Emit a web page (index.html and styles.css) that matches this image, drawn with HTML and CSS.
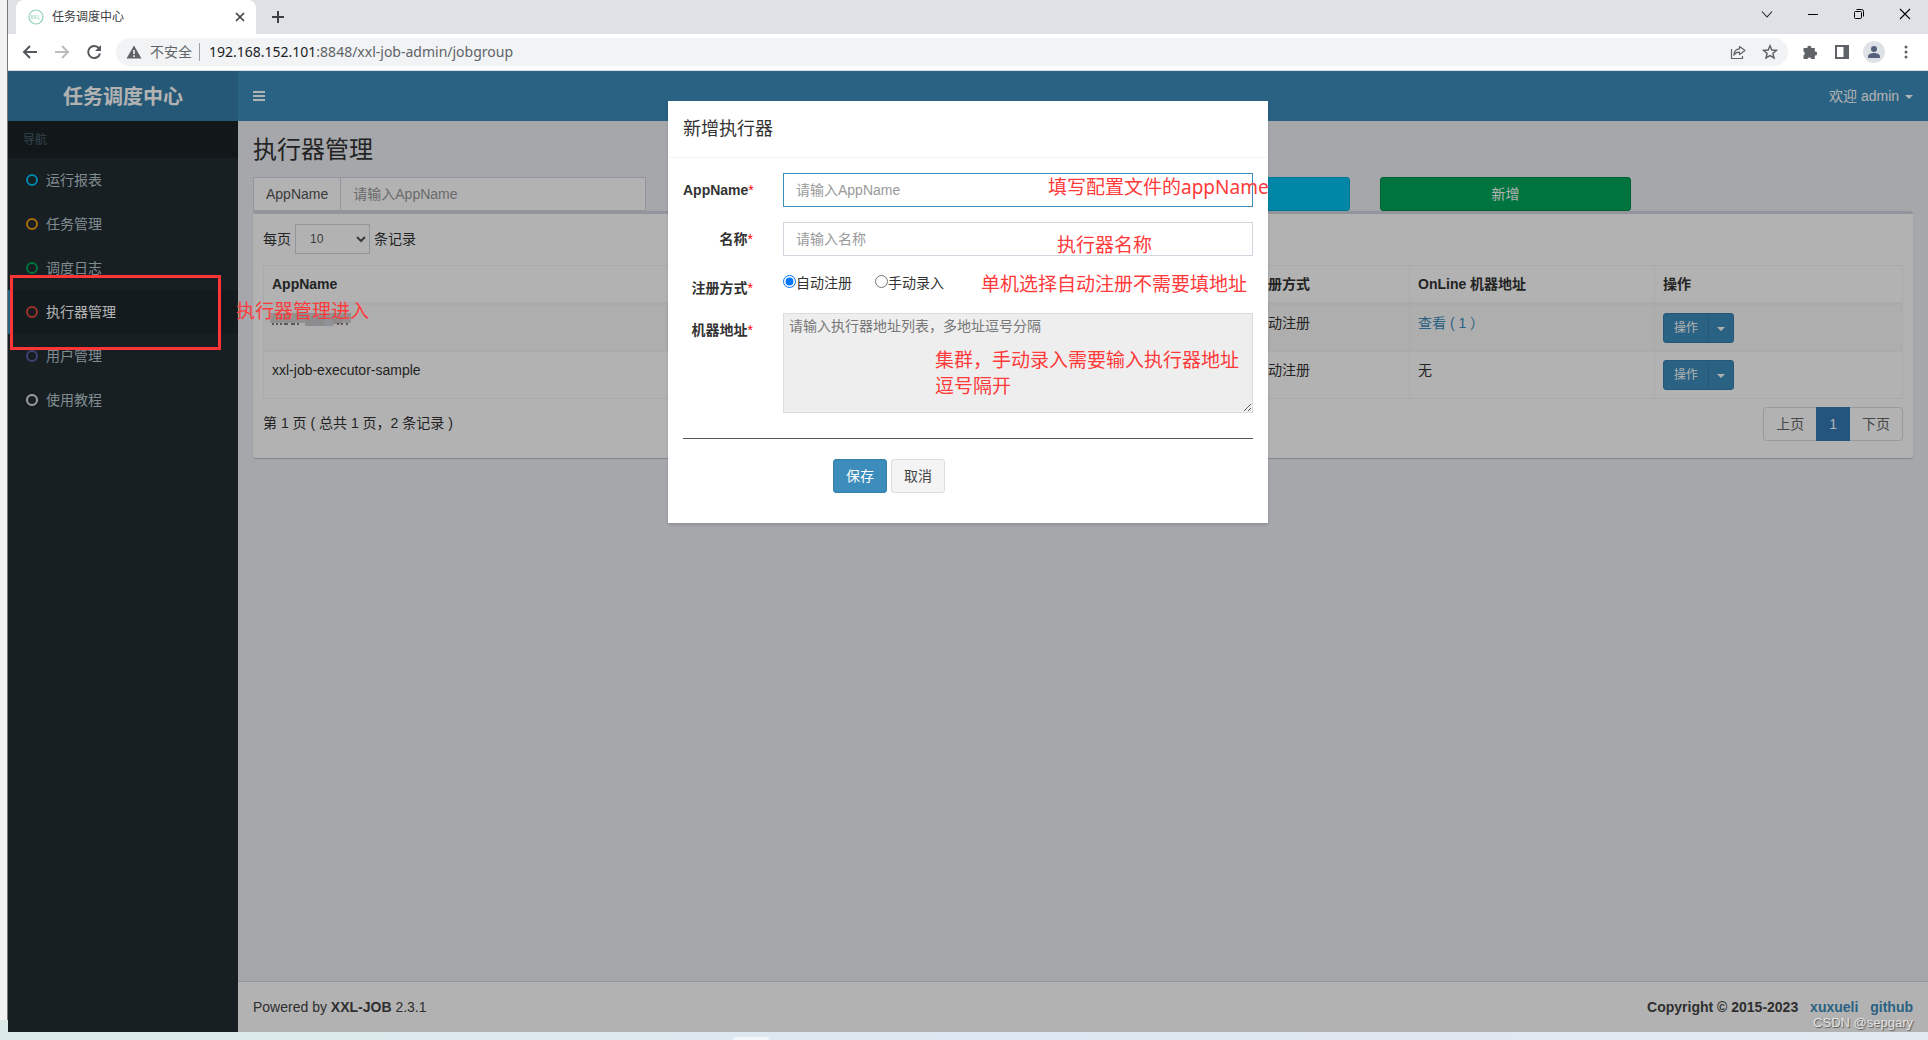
FILE: index.html
```html
<!DOCTYPE html>
<html lang="zh-CN">
<head>
<meta charset="utf-8">
<title>任务调度中心</title>
<link rel="stylesheet" href="styles.css">
</head>
<body>
<div class="desktop">
  <div class="behind"></div>
  <div class="window">
    <div class="tabstrip">
      <div class="tab">
        <svg class="favicon" width="16" height="16" viewBox="0 0 16 16"><ellipse cx="8" cy="8" rx="7" ry="7" fill="none" stroke="#8fd3b6" stroke-width="1.2"/><path d="M3 6l2 4M5 6l-2 4M6 6l2 4M8 6l-2 4M10 6v4h2" fill="none" stroke="#a9dcc6" stroke-width=".9"/></svg>
        <span class="tab-title">任务调度中心</span>
        <button class="chrome-btn" aria-label="关闭标签页"><svg width="16" height="16" viewBox="0 0 16 16"><path d="M4 4l8 8M12 4l-8 8" stroke="#3c4043" stroke-width="1.7"/></svg></button>
      </div>
      <button class="chrome-btn new-tab" aria-label="新标签页"><svg width="16" height="16" viewBox="0 0 16 16"><path d="M8 2v12M2 8h12" stroke="#3c4043" stroke-width="2"/></svg></button>
      <div class="window-controls">
        <button class="chrome-btn" aria-label="搜索标签页"><svg width="16" height="16" viewBox="0 0 16 16"><path d="M3 5.500l5 5.500 5-5.500" fill="none" stroke="#222" stroke-width="1.100"/></svg></button>
        <button class="chrome-btn" aria-label="最小化"><svg width="16" height="16" viewBox="0 0 16 16"><path d="M3 8.500h10" stroke="#000"/></svg></button>
        <button class="chrome-btn" aria-label="还原"><svg width="16" height="16" viewBox="0 0 16 16"><rect x="3.500" y="5.500" width="7" height="7" rx="1" fill="none" stroke="#000"/><path d="M5.500 3.500h5a2 2 0 0 1 2 2v5" fill="none" stroke="#000"/></svg></button>
        <button class="chrome-btn" aria-label="关闭"><svg width="16" height="16" viewBox="0 0 16 16"><path d="M3 3l10 10M13 3L3 13" stroke="#000" stroke-width="1.100"/></svg></button>
      </div>
    </div>
    <div class="toolbar">
      <button class="chrome-btn" aria-label="后退"><svg width="16" height="16" viewBox="0 0 16 16"><path d="M15 8H2.500M8 2L2 8l6 6" fill="none" stroke="#55585c" stroke-width="2"/></svg></button>
      <button class="chrome-btn" aria-label="前进"><svg width="16" height="16" viewBox="0 0 16 16"><path d="M1 8h12.500M8 2l6 6-6 6" fill="none" stroke="#babcbe" stroke-width="2"/></svg></button>
      <button class="chrome-btn" aria-label="刷新"><svg width="16" height="16" viewBox="0 0 16 16"><path d="M13 4.400A6 6 0 1 0 14 9.500" fill="none" stroke="#55585c" stroke-width="2"/><path d="M15 1v6H9z" fill="#55585c"/></svg></button>
      <div class="omnibox">
        <svg width="16" height="16" viewBox="0 0 16 16"><path d="M8 1.500L15.500 14.500H.5z" fill="#5f6368"/><path d="M8 6v4M8 11.300v1.600" stroke="#f1f3f4" stroke-width="1.600"/></svg>
        <span class="insecure">不安全</span>
        <span class="url"><b>192.168.152.101</b>:8848/xxl-job-admin/jobgroup</span>
        <button class="chrome-btn share" aria-label="分享"><svg width="16" height="16" viewBox="0 0 16 16"><path d="M1.500 5v9.500h11V12" fill="none" stroke="#5f6368" stroke-width="1.200"/><path d="M9.500 2.500l5.500 4-5.500 4V8.200C7 8 5.200 9 3.800 11.200 4 7.600 6.300 5 9.500 4.800z" fill="none" stroke="#5f6368" stroke-width="1.200" stroke-linejoin="round"/></svg></button>
        <button class="chrome-btn" aria-label="收藏"><svg width="16" height="16" viewBox="0 0 16 16"><path d="M8 1.800l1.800 4.200 4.600.4-3.500 3 1.100 4.500L8 11.500l-4 2.400 1.100-4.500-3.500-3L6.200 6z" fill="none" stroke="#5f6368" stroke-width="1.500"/></svg></button>
      </div>
      <button class="chrome-btn" aria-label="扩展程序"><svg width="16" height="16" viewBox="0 0 16 16"><path d="M1.500 4h4a1.900 1.900 0 1 1 3.700 0h3.600v3.700a1.900 1.900 0 1 1 0 3.700V15H9.200a1.900 1.900 0 0 0-3.700 0h-4v-3.800a1.900 1.900 0 0 0 0-3.600z" fill="#5f6368"/></svg></button>
      <button class="chrome-btn" aria-label="侧边栏"><svg width="16" height="16" viewBox="0 0 16 16"><rect x="2" y="2" width="12" height="12" fill="none" stroke="#5f6368" stroke-width="2"/><path d="M9.500 2h5v12h-5z" fill="#5f6368"/></svg></button>
      <button class="chrome-btn avatar" aria-label="用户"><svg width="16" height="16" viewBox="0 0 16 16"><circle cx="8" cy="5" r="3" fill="#55617a"/><path d="M2 14v-1.500C2 10 5.500 9 8 9s6 1 6 3.500V14z" fill="#55617a"/></svg></button>
      <button class="chrome-btn" aria-label="菜单"><svg width="16" height="16" viewBox="0 0 16 16"><g fill="#5f6368"><circle cx="8" cy="3" r="1.500"/><circle cx="8" cy="8" r="1.500"/><circle cx="8" cy="13" r="1.500"/></g></svg></button>
    </div>

    <div class="app">
      <header class="app-header">
        <a class="logo" href="#">任务调度中心</a>
        <nav class="navbar">
          <button class="menu-toggle" aria-label="切换导航"><svg width="14" height="12" viewBox="0 0 14 12"><path d="M0 2h12M0 6h12M0 10h12" stroke="#fff" stroke-width="2"/></svg></button>
          <a class="user-menu" href="#">欢迎 admin <i class="caret"></i></a>
        </nav>
      </header>
      <div class="app-body">
        <aside class="sidebar">
          <div class="nav-label">导航</div>
          <a class="nav-item aqua" href="#"><i class="ring"></i>运行报表</a>
          <a class="nav-item yellow" href="#"><i class="ring"></i>任务管理</a>
          <a class="nav-item green" href="#"><i class="ring"></i>调度日志</a>
          <a class="nav-item red active" href="#"><i class="ring"></i>执行器管理</a>
          <a class="nav-item purple" href="#"><i class="ring"></i>用户管理</a>
          <a class="nav-item plain" href="#"><i class="ring"></i>使用教程</a>
        </aside>
        <div class="main">
          <main class="content">
            <h1>执行器管理</h1>
            <div class="filters">
              <div class="input-group">
                <label for="filter-app">AppName</label>
                <input id="filter-app" type="text" placeholder="请输入AppName">
              </div>
              <button class="btn btn-info" aria-label="搜索"></button>
              <button class="btn btn-success">新增</button>
            </div>
            <section class="box">
              <div class="length">
                <label for="page-size">每页</label>
                <select id="page-size"><option>10</option></select>
                <span>条记录</span>
              </div>
              <table>
                <colgroup><col><col class="c-type"><col class="c-online"><col class="c-action"></colgroup>
                <thead>
                  <tr><th>AppName</th><th>注册方式</th><th>OnLine 机器地址</th><th>操作</th></tr>
                </thead>
                <tbody>
                  <tr>
                    <td><svg class="mosaic" width="82" height="14" viewBox="0 0 82 14"><path d="M0 0h81v10H0z" fill="#d3d0cf"/><path d="M12 0h8v7h-8zM27 0h8v7h-8z" fill="#c9c6c6"/><path d="M35 3h28v10H35z" fill="#c9c9cd"/><path d="M54 3h9v10h-9z" fill="#cdd2dc"/><path d="M63 3h9v8h-9z" fill="#cbc5c4"/><path d="M2 11h2M6 11h2M10 11h2M14 11h4M21 11h4M27 11h2M67 11h2M71 11h2M76 11h2" stroke="#555" stroke-width="1.500"/></svg></td>
                    <td>自动注册</td>
                    <td><a href="#">查看 ( 1 ）</a></td>
                    <td><div class="btn-group"><button>操作</button><button aria-label="展开操作"><i class="caret"></i></button></div></td>
                  </tr>
                  <tr>
                    <td>xxl-job-executor-sample</td>
                    <td>自动注册</td>
                    <td>无</td>
                    <td><div class="btn-group"><button>操作</button><button aria-label="展开操作"><i class="caret"></i></button></div></td>
                  </tr>
                </tbody>
              </table>
              <div class="table-foot">
                <span class="info">第 1 页 ( 总共 1 页，2 条记录 )</span>
                <div class="pager"><a href="#">上页</a><a class="current" href="#">1</a><a href="#">下页</a></div>
              </div>
            </section>
          </main>
          <footer class="app-footer">
            <span>Powered by <b>XXL-JOB</b> 2.3.1</span>
            <strong>Copyright © 2015-2023 <a href="#">xuxueli</a> <a href="#">github</a></strong>
          </footer>
        </div>
      </div>

      <div class="backdrop">
        <form class="modal">
          <div class="modal-header"><h4>新增执行器</h4></div>
          <div class="modal-body">
            <div class="row">
              <label class="field-label" for="appname">AppName<em>*</em></label>
              <input class="control focused" id="appname" type="text" placeholder="请输入AppName">
            </div>
            <div class="row">
              <label class="field-label" for="title">名称<em>*</em></label>
              <input class="control" id="title" type="text" placeholder="请输入名称">
            </div>
            <div class="row">
              <span class="field-label">注册方式<em>*</em></span>
              <div class="radios">
                <label><input type="radio" name="type" checked>自动注册</label>
                <label><input type="radio" name="type">手动录入</label>
              </div>
            </div>
            <div class="row">
              <label class="field-label" for="address">机器地址<em>*</em></label>
              <textarea id="address" placeholder="请输入执行器地址列表，多地址逗号分隔" readonly></textarea>
            </div>
            <hr>
            <div class="actions">
              <button class="btn btn-primary" type="button">保存</button>
              <button class="btn btn-default" type="button">取消</button>
            </div>
          </div>
          <p class="note note-appname">填写配置文件的appName</p>
          <p class="note note-title">执行器名称</p>
          <p class="note note-type">单机选择自动注册不需要填地址</p>
          <p class="note note-address">集群，手动录入需要输入执行器地址<br>逗号隔开</p>
        </form>
      </div>
      <div class="marker"></div>
      <p class="note note-menu">执行器管理进入</p>
      <div class="watermark">CSDN @sepgary</div>
    </div>
  </div>
  <div class="taskbar-tip"></div>
</div>
</body>
</html>
```
FILE: styles.css
```css
* { box-sizing: border-box; }

body {
  margin: 0;
  font: 14px/20px "Liberation Sans", "Noto Sans CJK SC", sans-serif;
  color: #333;
}

a { color: #3c8dbc; text-decoration: none; }
button, input, select, textarea { font: inherit; margin: 0; }
button { cursor: pointer; }
p { margin: 0; }

.desktop {
  position: relative;
  display: flex;
  min-height: 100vh;
  padding-bottom: 8px;
  background: linear-gradient(90deg, #dceae8, #dde8f2 50%, #e2e8f0);
}

.behind {
  width: 8px;
  margin-bottom: 12px;
  background: #f2f2f2;
  border-right: 1px solid #777;
}

.taskbar-tip {
  position: absolute;
  left: 38%;
  bottom: 0;
  width: 36px;
  height: 3px;
  border-radius: 3px 3px 0 0;
  background: #f3f7fa;
}

.window { flex: 1; display: flex; flex-direction: column; min-width: 0; }

/* Browser chrome */
.chrome-btn {
  display: flex;
  align-items: center;
  justify-content: center;
  width: 16px;
  height: 16px;
  padding: 0;
  border: 0;
  background: none;
}

.tabstrip {
  display: flex;
  height: 34px;
  padding-left: 8px;
  background: #dee1e6;
}

.tab {
  display: flex;
  align-items: center;
  width: 240px;
  padding: 0 8px 0 12px;
  border-radius: 8px 8px 0 0;
  background: #fff;
  font-size: 12px;
}

.tab-title { flex: 1; margin-left: 8px; color: #3c4043; }
.new-tab { align-self: center; margin-left: 14px; }

.window-controls { display: flex; gap: 30px; margin: 6px 15px 0 auto; }

.toolbar {
  display: flex;
  align-items: center;
  gap: 16px;
  height: 37px;
  padding: 0 14px;
  border-bottom: 1px solid #dadce0;
  background: #fff;
}

.omnibox {
  flex: 1;
  display: flex;
  align-items: center;
  height: 28px;
  margin: 0 -2px;
  padding: 0 10px;
  border-radius: 14px;
  background: #f1f3f4;
  font-family: "Noto Sans", "Noto Sans CJK SC", sans-serif;
  color: #5f6368;
}

.insecure { margin: 0 9px 0 8px; padding-right: 7px; border-right: 1px solid #9aa0a6; line-height: 18px; }
.url b { font-weight: 400; color: #202124; }
.share { margin: 0 16px 0 auto; }
.avatar { width: 22px; height: 22px; margin: 0 -3px; border-radius: 50%; background: #dee1e6; }

/* Application */
.app { position: relative; flex: 1; display: flex; flex-direction: column; }

.app-header { display: flex; height: 50px; color: #fff; }
.logo {
  width: 230px;
  background: #367fa9;
  color: #fff;
  font-size: 20px;
  font-weight: 700;
  line-height: 52px;
  text-align: center;
}
.navbar {
  flex: 1;
  display: flex;
  align-items: center;
  justify-content: space-between;
  padding: 0 15px;
  background: #3c8dbc;
}
.menu-toggle { display: flex; padding: 0; border: 0; background: none; }
.user-menu { color: #fff; }
.caret {
  display: inline-block;
  margin-left: 2px;
  border: 4px solid transparent;
  border-top-color: currentColor;
  border-bottom: 0;
  vertical-align: middle;
}

.app-body { flex: 1; display: flex; }

.sidebar { width: 230px; background: #222d32; }
.nav-label {
  padding: 11px 15px 9px;
  background: #1a2226;
  color: #4b646f;
  font-size: 12px;
  line-height: 17px;
}
.nav-item {
  display: flex;
  align-items: center;
  gap: 8px;
  height: 44px;
  padding-left: 15px;
  border-left: 3px solid transparent;
  color: #b8c7ce;
}
.nav-item.active { border-color: #3c8dbc; background: #1e282c; color: #fff; }
.ring { width: 12px; height: 12px; border: 2px solid; border-radius: 50%; }
.aqua .ring { color: #00c0ef; }
.yellow .ring { color: #f39c12; }
.green .ring { color: #00a65a; }
.red .ring { color: #dd4b39; }
.purple .ring { color: #605ca8; }
.plain .ring { color: #dfe5e8; }

.main { flex: 1; display: flex; flex-direction: column; min-width: 0; background: #ecf0f5; }
.content { flex: 1; padding: 15px; }
h1 { margin: 0 0 13px; font-size: 24px; font-weight: 400; line-height: 28px; }

.filters { display: grid; grid-template-columns: repeat(12, 1fr); margin: 0 -15px; }
.filters > * { margin: 0 15px; }
.input-group { grid-column: span 3; display: flex; height: 34px; border: 1px solid #d2d6de; background: #fff; }
.input-group label { padding: 6px 12px; border-right: 1px solid #d2d6de; color: #555; }
.input-group input { flex: 1; min-width: 0; padding: 0 12px; border: 0; background: none; }
input::placeholder { color: #999; }

.btn { height: 34px; padding: 0 12px; border: 1px solid; border-radius: 3px; color: #fff; }
.btn-info { grid-column: 7 / span 2; background: #00c0ef; border-color: #00acd6; }
.btn-success { grid-column: 9 / span 2; background: #00a65a; border-color: #008d4c; }
.btn-primary { background: #3c8dbc; border-color: #367fa9; }
.btn-default { background: #f4f4f4; border-color: #ddd; color: #444; }

.box {
  padding: 10px 10px 17px;
  border-top: 3px solid #d2d6de;
  border-radius: 3px;
  background: #fff;
  box-shadow: 0 1px 1px rgba(0, 0, 0, .2);
}
.length { display: flex; align-items: center; gap: 4px; margin-bottom: 11px; }
.length select {
  width: 75px;
  height: 30px;
  padding: 0 10px;
  border: 1px solid #d2d6de;
  background: #fff;
  color: #555;
  font-size: 12px;
}

table { width: 100%; border-collapse: separate; border-spacing: 0; table-layout: fixed; border: 1px solid #f4f4f4; border-width: 1px 0 0 1px; }
.c-type { width: 164px; }
.c-online { width: 245px; }
.c-action { width: 248px; }
th, td { padding: 8px; border: 0 solid #f4f4f4; border-width: 0 1px 1px 0; text-align: left; vertical-align: top; }
th { border-bottom-width: 3px; color: #333; }
tbody tr:first-child { background: #f9f9f9; }
.mosaic { display: block; margin-left: -2px; }

.btn-group { display: flex; }
.btn-group button {
  height: 30px;
  padding: 0 10px;
  border: 1px solid #367fa9;
  border-radius: 3px 0 0 3px;
  background: #3c8dbc;
  color: #fff;
  font-size: 12px;
}
.btn-group button + button { margin-left: -1px; padding: 0 8px; border-radius: 0 3px 3px 0; }
.btn-group .caret { margin: 0; }

.table-foot { display: flex; justify-content: space-between; margin-top: 8px; }
.info { padding-top: 6px; }
.pager { display: flex; }
.pager a { padding: 6px 12px; border: 1px solid #ddd; color: #666; }
.pager a:first-child { border-right: 0; border-radius: 4px 0 0 4px; }
.pager a:last-child { border-left: 0; border-radius: 0 4px 4px 0; }
.pager .current { background: #337ab7; border-color: #337ab7; color: #fff; }

.app-footer {
  display: flex;
  justify-content: space-between;
  padding: 15px;
  border-top: 1px solid #d2d6de;
  background: #fff;
  color: #444;
}
.app-footer strong a { margin-left: 8px; }

/* Dialog */
.backdrop { position: absolute; inset: 0; background: rgba(0, 0, 0, .3); }
.modal {
  position: relative;
  width: 600px;
  margin: 30px auto;
  background: #fff;
  box-shadow: 0 2px 3px rgba(0, 0, 0, .125);
}
.modal-header { padding: 15px; border-bottom: 1px solid #f4f4f4; }
.modal h4 { margin: 0; font-size: 18px; font-weight: 400; line-height: 26px; }
.modal-body { padding: 15px 15px 30px; }
.row { display: flex; gap: 30px; margin-bottom: 15px; }
.field-label { width: 70px; padding-top: 7px; font-weight: 700; text-align: right; white-space: nowrap; }
.field-label em { color: #f00; font-style: normal; font-weight: 400; }
.control { flex: 1; height: 34px; padding: 0 12px; border: 1px solid #d2d6de; }
.control.focused { border-color: #3c8dbc; }
.radios { display: flex; gap: 23px; padding-top: 2px; }
.radios label { display: flex; align-items: flex-start; }
.radios input { width: 13px; height: 13px; margin: 2px 0 0; }
.modal textarea { flex: 1; height: 100px; padding: 2px 5px; border: 1px solid #ddd; background: #eee; }
.modal textarea::placeholder { color: #777; }
.modal hr { height: 1px; margin: 25px 0 20px; border: 0; background: #555; }
.actions { display: flex; gap: 4px; padding-left: 150px; }

/* Red notes laid over the page */
.note {
  position: absolute;
  font: 19px/26px "Noto Sans", "Noto Sans CJK SC", sans-serif;
  color: #ff3a3a;
  white-space: nowrap;
}
.note-appname { left: 380px; top: 73px; }
.note-title { left: 389px; top: 131px; }
.note-type { left: 313px; top: 170px; }
.note-address { left: 267px; top: 246px; }
.note-menu { left: 228px; top: 227px; }
.marker { position: absolute; left: 2px; top: 204px; width: 211px; height: 75px; border: 3px solid #ff3535; }
.watermark {
  position: absolute;
  right: 15px;
  bottom: 0;
  font: 13px/18px "Liberation Sans", sans-serif;
  color: #e4e4e4;
  text-shadow: 1px 1px 1px #555;
}
```
